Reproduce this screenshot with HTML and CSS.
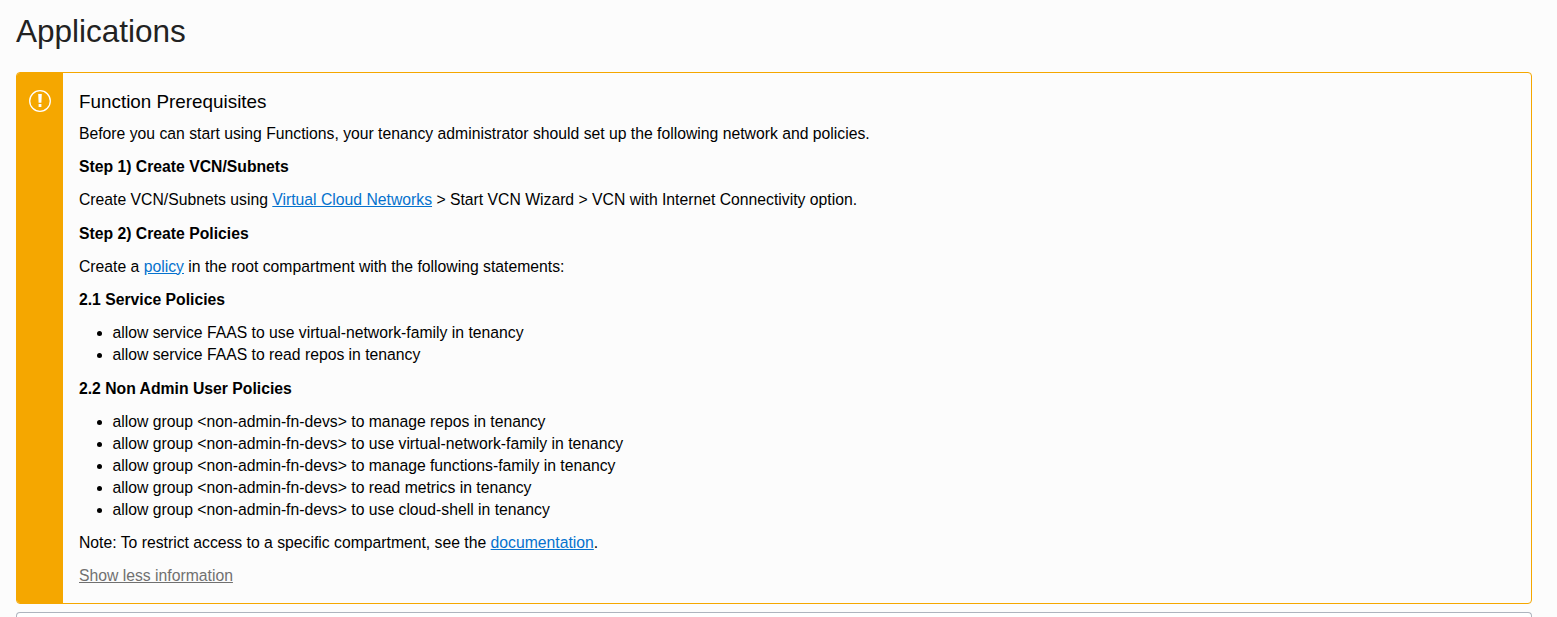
FILE: index.html
```html
<!DOCTYPE html>
<html lang="en">
<head>
<meta charset="utf-8">
<title>Applications</title>
<link rel="stylesheet" href="styles.css">
</head>
<body>
<main class="page">
<h1 class="page-title">Applications</h1>
<section class="notice">
<div class="notice-bar">
<svg class="notice-icon" viewBox="0 0 24 24" width="24" height="24"><circle cx="12" cy="12" r="10.3" fill="none" stroke="#fff" stroke-width="1.3"/><path d="M10.2 5h3.6l-.4 8.8h-2.8zM10.6 15h2.8v3h-2.8z" fill="#fff"/></svg>
</div>
<div class="notice-body">
<h2 class="notice-title">Function Prerequisites</h2>
<p class="line">Before you can start using Functions, your tenancy administrator should set up the following network and policies.</p>
<h3 class="line strong">Step 1) Create VCN/Subnets</h3>
<p class="line">Create VCN/Subnets using <a class="link" href="#">Virtual Cloud Networks</a> &gt; Start VCN Wizard &gt; VCN with Internet Connectivity option.</p>
<h3 class="line strong">Step 2) Create Policies</h3>
<p class="line">Create a <a class="link" href="#">policy</a> in the root compartment with the following statements:</p>
<h3 class="line strong">2.1 Service Policies</h3>
<ul class="list">
<li>allow service FAAS to use virtual-network-family in tenancy</li>
<li>allow service FAAS to read repos in tenancy</li>
</ul>
<h3 class="line strong">2.2 Non Admin User Policies</h3>
<ul class="list">
<li>allow group &lt;non-admin-fn-devs&gt; to manage repos in tenancy</li>
<li>allow group &lt;non-admin-fn-devs&gt; to use virtual-network-family in tenancy</li>
<li>allow group &lt;non-admin-fn-devs&gt; to manage functions-family in tenancy</li>
<li>allow group &lt;non-admin-fn-devs&gt; to read metrics in tenancy</li>
<li>allow group &lt;non-admin-fn-devs&gt; to use cloud-shell in tenancy</li>
</ul>
<p class="line">Note: To restrict access to a specific compartment, see the <a class="link" href="#">documentation</a>.</p>
<p class="line"><a class="toggle" href="#">Show less information</a></p>
</div>
</section>
<section class="panel"></section>
</main>
</body>
</html>
```
FILE: styles.css
```css
* { box-sizing: border-box; }
body { margin: 0; background: #fcfcfc; color: #000; font: 15.74px/22px "Liberation Sans", Arial, sans-serif; }
.page { display: flex; flex-direction: column; height: 617px; padding: 12px 25px 0 16px; }
.page-title { margin: 0 0 22px; font-size: 31.5px; line-height: 38px; font-weight: 400; color: #222; }
.notice { display: flex; flex: none; height: 532px; border: 1px solid #f5a700; border-radius: 4px; overflow: hidden; }
.notice-bar { width: 46px; flex: none; background: #f5a700; padding: 16px 0 0 11px; }
.notice-icon { display: block; }
.notice-body { padding: 18px 16px 0; white-space: nowrap; }
.notice-title { margin: 0 0 10px; font-size: 18.85px; line-height: 22px; font-weight: 400; }
.line { margin: 0 0 11.22px; font-size: 15.74px; font-weight: 400; }
.strong { font-weight: 700; }
.list { margin: 0 0 11.22px; padding-left: 33.5px; }
.link { color: #0572ce; }
.toggle { color: #707070; }
.panel { flex: 1; margin-top: 8px; background: #fff; border: 1px solid #aeb4be; border-bottom: 0; border-radius: 4px 4px 0 0; }
```
